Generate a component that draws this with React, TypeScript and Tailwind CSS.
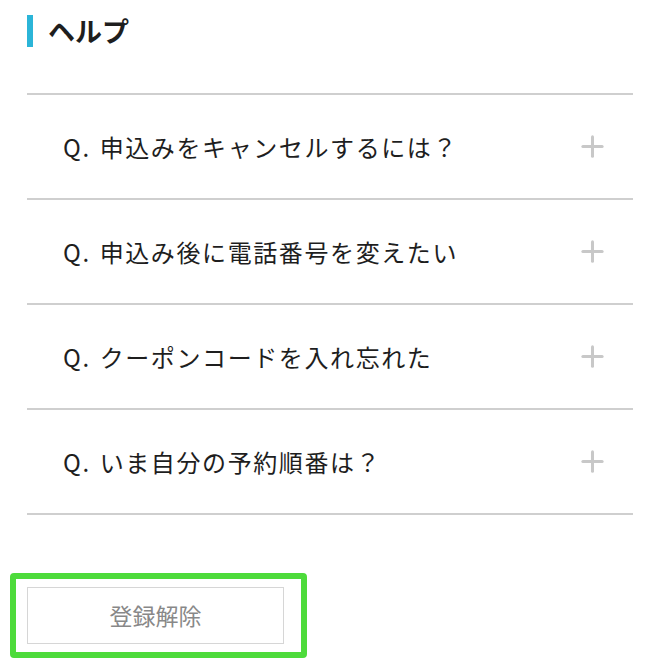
import { Plus } from "lucide-react";

const questions = [
  "申込みをキャンセルするには？",
  "申込み後に電話番号を変えたい",
  "クーポンコードを入れ忘れた",
  "いま自分の予約順番は？",
];

export default function App() {
  return (
    <div className="min-h-screen bg-white font-['Noto_Sans_CJK_JP','Noto_Sans',sans-serif] text-[#1e1e1e]">
      <div className="px-[27px] pt-[15px]">
        <div className="flex items-center gap-[15px]">
          <span className="block h-[32px] w-[6px] bg-[#2bb5d8]" />
          <h1 className="text-[27px] font-bold leading-[32px]">ヘルプ</h1>
        </div>

        <ul className="mt-[46px] border-t-2 border-[#cfcfcf]">
          {questions.map((q) => (
            <li
              key={q}
              className="flex h-[105px] items-center justify-between border-b-2 border-[#cfcfcf] pl-[36px] pr-[24px]"
            >
              <span className="text-[24px] leading-none tracking-[1.6px]">
                Q. <span className="ml-[2px]">{q}</span>
              </span>
              <Plus className="text-[#c8c8c8]" size={33} strokeWidth={2.2} />
            </li>
          ))}
        </ul>
      </div>

      <div className="ml-[10px] mt-[58px] w-[297px] rounded-[4px] border-[6px] border-[#4ddb3b] px-[11px] py-[8px]">
        <button className="flex h-[57px] w-[257px] items-center justify-center border border-[#d6d6d6] bg-white text-[23px] text-[#888888]">
          登録解除
        </button>
      </div>
    </div>
  );
}
